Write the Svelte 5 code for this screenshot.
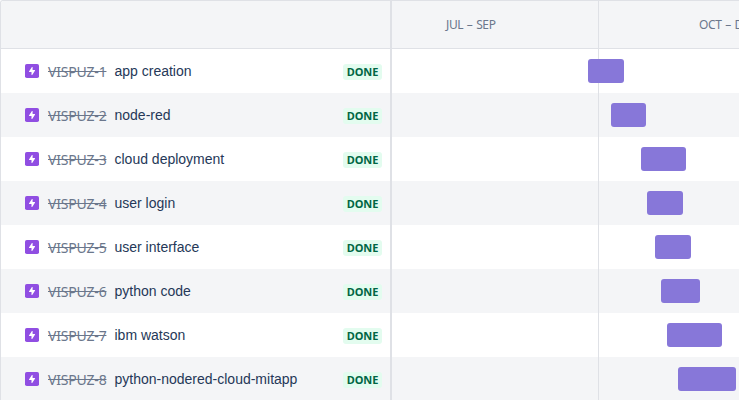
<script>
  const epics = [
    { name: 'app creation', start: 196, length: 36 },
    { name: 'node-red', start: 218.6, length: 35.8 },
    { name: 'cloud deployment', start: 249.2, length: 44.4 },
    { name: 'user login', start: 255, length: 36 },
    { name: 'user interface', start: 263.3, length: 36 },
    { name: 'python code', start: 269, length: 38.6 },
    { name: 'ibm watson', start: 274.6, length: 55.3 },
    { name: 'python-nodered-cloud-mitapp', start: 285.7, length: 58.3 }
  ];
</script>

<div class="roadmap">
  <section class="list">
    <div class="head"></div>
    {#each epics as epic, i}
      <div class="row">
        <svg class="icon" viewBox="0 0 14 14" width="14" height="14">
          <rect width="14" height="14" rx="1.8" fill="#904ee2" />
          <path d="M7.6 3v3.1h2.1q.6 0 .4.5L7.2 11.1H6.5V7.9H4.4q-.6 0-.4-.5L6.9 3z" fill="#fff" />
        </svg>
        <span class="key">VISPUZ-{i + 1}</span>
        <span class="name">{epic.name}</span>
        <span class="status">DONE</span>
      </div>
    {/each}
  </section>
  <section class="timeline">
    <div class="head">
      <div class="quarter first">JUL – SEP</div>
      <div class="quarter second">OCT – DEC</div>
    </div>
    {#each epics as epic}
      <div class="row track">
        <div class="bar" style="margin-left: {epic.start}px; width: {epic.length}px"></div>
      </div>
    {/each}
  </section>
</div>

<style>
  :global(body) {
    overflow: hidden;
  }
  .roadmap {
    box-sizing: border-box;
    display: flex;
    width: 739px;
    height: 400px;
    overflow: hidden;
    background: #fff;
    border-top: 1px solid #dfe1e6;
    border-left: 1px solid #dfe1e6;
    border-top-left-radius: 3px;
    font-family: 'Liberation Sans', Arial, sans-serif;
    font-size: 14px;
    color: #253858;
  }
  .list {
    box-sizing: border-box;
    flex: none;
    width: 391px;
    height: 408px;
    border-right: 2px solid #dfe1e6;
  }
  .timeline {
    flex: 1;
    min-width: 0;
    height: 408px;
    overflow: hidden;
  }
  .head {
    box-sizing: border-box;
    display: flex;
    height: 48px;
    background: #f4f5f7;
    border-bottom: 1px solid #dfe1e6;
  }
  .row {
    box-sizing: border-box;
    display: flex;
    align-items: center;
    height: 44px;
    background-color: #fff;
  }
  .list .row {
    padding: 0 8px 0 24px;
  }
  .row:nth-child(odd) {
    background-color: #f4f5f7;
  }
  .icon {
    flex: none;
    margin-right: 9px;
  }
  .key {
    flex: none;
    width: 66.5px;
    padding-top: 2px;
    font-family: 'Noto Sans', sans-serif;
    font-size: 14px;
    line-height: 20px;
    letter-spacing: -0.2px;
    color: #6b778c;
    text-decoration: line-through;
    white-space: nowrap;
  }
  .name {
    flex: 1;
    line-height: 20px;
    white-space: nowrap;
  }
  .status {
    box-sizing: border-box;
    width: 39px;
    height: 16px;
    margin-top: 1px;
    border-radius: 3px;
    background: #e3fcef;
    color: #006644;
    font-family: 'Noto Sans', sans-serif;
    font-size: 11px;
    font-weight: 700;
    line-height: 16px;
    letter-spacing: -0.1px;
    text-align: center;
  }
  .quarter {
    box-sizing: border-box;
    flex: none;
    font-family: 'Noto Sans', sans-serif;
    font-size: 12px;
    line-height: 48px;
    letter-spacing: -0.4px;
    word-spacing: 1px;
    color: #6b778c;
    white-space: nowrap;
  }
  .first {
    width: 207px;
    padding-left: 54px;
    border-right: 1px solid #dfe1e6;
  }
  .second {
    padding-left: 100px;
  }
  .track {
    background-image: linear-gradient(#dfe1e6, #dfe1e6);
    background-size: 1px 100%;
    background-position: 206px 0;
    background-repeat: no-repeat;
  }
  .bar {
    flex: none;
    height: 24px;
    border-radius: 3px;
    background: #8777d9;
  }
</style>
